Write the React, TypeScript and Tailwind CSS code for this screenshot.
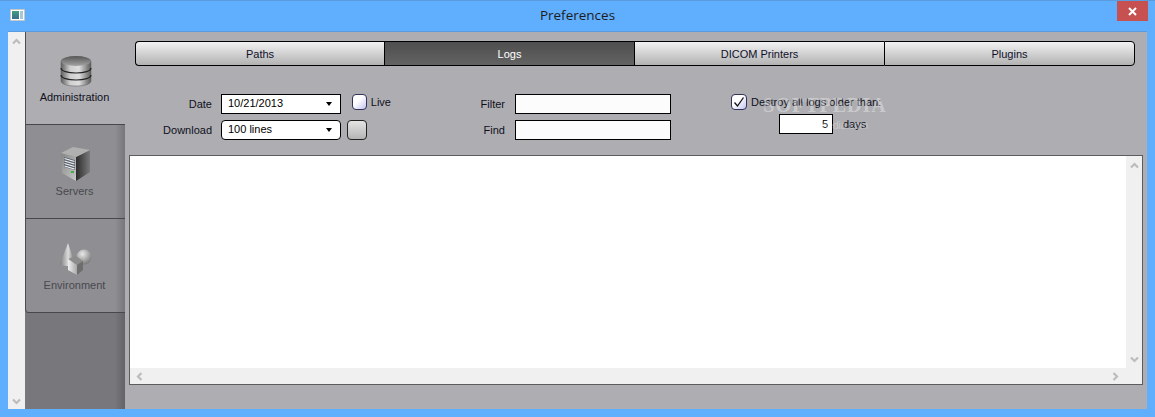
import React from "react";

function Chevron({ dir, className }: { dir: "up" | "down" | "left" | "right"; className?: string }) {
  const pts = {
    up: "1,6.5 4.5,3 8,6.5",
    down: "1,2.5 4.5,6 8,2.5",
    left: "6.5,1 3,4.5 6.5,8",
    right: "2.5,1 6,4.5 2.5,8",
  }[dir];
  return (
    <svg width="9" height="9" viewBox="0 0 9 9" className={className}>
      <polyline points={pts} fill="none" stroke="#bcbcbc" strokeWidth="2.2" />
    </svg>
  );
}

function DatabaseIcon() {
  return (
    <svg width="32" height="32" viewBox="0 0 32 32" className="mt-px">
      <defs>
        <linearGradient id="dbBody" x1="0" x2="1" y1="0" y2="0">
          <stop offset="0" stopColor="#5e5e5e" />
          <stop offset="0.3" stopColor="#cfcfcf" />
          <stop offset="0.6" stopColor="#dedede" />
          <stop offset="1" stopColor="#5a5a5a" />
        </linearGradient>
        <linearGradient id="dbTop" x1="0" x2="0" y1="0" y2="1">
          <stop offset="0" stopColor="#565656" />
          <stop offset="1" stopColor="#a4a4a4" />
        </linearGradient>
      </defs>
      <path d="M1 6v20c0 3 6.5 5 15 5s15-2 15-5V6z" fill="url(#dbBody)" stroke="#666" strokeWidth="0.6" />
      <ellipse cx="16" cy="6" rx="15" ry="5" fill="url(#dbTop)" />
      <path d="M1 13c0 3 6.5 5 15 5s15-2 15-5" fill="none" stroke="#222" strokeWidth="1.2" />
      <path d="M1 20c0 3 6.5 5 15 5s15-2 15-5" fill="none" stroke="#222" strokeWidth="1.2" />
    </svg>
  );
}

function ServerIcon() {
  return (
    <svg width="31" height="35" viewBox="0 0 31 35">
      <defs>
        <linearGradient id="srvFront" x1="0" x2="1" y1="0" y2="1">
          <stop offset="0" stopColor="#858585" />
          <stop offset="1" stopColor="#c8c8c8" />
        </linearGradient>
        <linearGradient id="srvSide" x1="0" x2="1" y1="0" y2="0">
          <stop offset="0" stopColor="#2c2c2c" />
          <stop offset="1" stopColor="#7a7a7a" />
        </linearGradient>
      </defs>
      <path d="M1 6 16 10v24L2 26z" fill="url(#srvFront)" />
      <path d="M16 10 30 3v22L16 34z" fill="url(#srvSide)" />
      <path d="M1 6 13 0l17 3-14 7z" fill="#b0b0b0" />
      <path d="M4 10 15 13v10L4 20z" fill="#5c6470" />
      <path d="M4.5 11.5 14.5 14.5M4.5 14 14.5 17M4.5 16.5 14.5 19.5M4.5 19 14.5 22" stroke="#f4f4f4" strokeWidth="1.2" />
      <rect x="11" y="24" width="3" height="2" fill="#3fb24a" />
    </svg>
  );
}

function ShapesIcon() {
  return (
    <svg width="34" height="33" viewBox="0 0 34 33" className="mt-[2px]">
      <defs>
        <linearGradient id="cone" x1="0" x2="1" y1="0" y2="0">
          <stop offset="0" stopColor="#7c7c7c" />
          <stop offset="0.55" stopColor="#dcdcdc" />
          <stop offset="1" stopColor="#6a6a6a" />
        </linearGradient>
        <radialGradient id="ball" cx="0.4" cy="0.3" r="0.8">
          <stop offset="0" stopColor="#e8e8e8" />
          <stop offset="1" stopColor="#6c6c6c" />
        </radialGradient>
        <linearGradient id="cube" x1="0" x2="1" y1="0" y2="0">
          <stop offset="0" stopColor="#efefef" />
          <stop offset="1" stopColor="#a8a8a8" />
        </linearGradient>
      </defs>
      <path d="M9 0 1 21c1 2.500 13 2.500 15 0z" fill="url(#cone)" />
      <circle cx="25" cy="14" r="7.500" fill="url(#ball)" />
      <path d="M9 16 17 13 24 18 18 22z" fill="#8c8c8c" />
      <path d="M9 16 18 22v10L9 27z" fill="url(#cube)" />
      <path d="M24 18 18 22v10l6-5z" fill="#6e6e6e" />
    </svg>
  );
}

function SideTab({ label, icon, active, last }: { label: string; icon: React.ReactNode; active?: boolean; last?: boolean }) {
  return (
    <div
      className={`flex flex-col items-center border-l border-b border-l-[#4c4c50] border-b-[#48484c] ${
        active
          ? "h-[93px] bg-[#aeaeb2] text-[#10101c]"
          : "h-[94px] bg-[linear-gradient(to_right,#8f8f93_90%,#77777b)] text-[#48484e]"
      } ${last ? "rounded-bl-[4px]" : ""}`}
    >
      <div className={`flex items-start justify-center pt-[22px] ${active ? "h-[58px]" : "h-[59px]"}`}>{icon}</div>
      <span className="pr-[2px] text-[11px] leading-[14px]">{label}</span>
    </div>
  );
}

function SegTab({ label, active, pos }: { label: string; active?: boolean; pos: "first" | "mid" | "last" }) {
  return (
    <div
      className={`flex h-[25px] items-center justify-center border-y border-l border-black pt-px text-[11px] ${
        pos === "first" ? "w-[249px] rounded-l-[4px]" : pos === "last" ? "w-[251px] rounded-r-[4px] border-r" : "w-[250px]"
      } ${
        active
          ? "bg-[linear-gradient(to_bottom,#4e4e4e,#636363)] text-white"
          : "bg-[linear-gradient(to_bottom,#f2f2f2,#b2b2b2)] text-[#10102c]"
      }`}
    >
      {label}
    </div>
  );
}

function Combo({ value, rounded }: { value: string; rounded?: boolean }) {
  return (
    <div
      className={`flex h-5 w-[120px] items-center justify-between border border-black bg-white pl-[6px] pr-[8px] text-[11px] text-black ${
        rounded ? "rounded-[4px]" : ""
      }`}
    >
      <span className="-mt-[2px]">{value}</span>
      <span className="h-0 w-0 border-x-[3.5px] border-t-[4px] border-x-transparent border-t-black" />
    </div>
  );
}

function CheckBox({ checked }: { checked?: boolean }) {
  return (
    <div className="flex h-4 w-4 items-center justify-center rounded-[4px] border border-[#33335a] bg-[linear-gradient(135deg,#ffffff_40%,#c4c4f0)]">
      {checked && (
        <svg width="12" height="12" viewBox="0 0 12 12">
          <polyline points="1.5,6.5 4.5,10 10.5,1.5" fill="none" stroke="#111" strokeWidth="1.3" />
        </svg>
      )}
    </div>
  );
}

export default function App() {
  return (
    <div className="flex h-[417px] w-[1155px] flex-col overflow-hidden border-t border-[#5a9ade] bg-[#60afff] font-['Liberation_Sans',sans-serif]">
      <div className="relative flex h-[30px] shrink-0 items-center justify-center">
        <div className="absolute left-[10px] top-[8px] flex h-[12px] w-[15px] gap-[1px] rounded-[1px] border border-[#c8c8c8] bg-white p-[1px]">
          <div className="w-[7px] bg-[linear-gradient(to_bottom,#3f9f80,#3a6a8a)]" />
          <div className="w-[3px] bg-[#a8c8d8]" />
        </div>
        <span className="-mt-[1px] font-['Open_Sans',sans-serif] text-[13.5px] text-[#1c1c1c]">Preferences</span>
        <div className="absolute right-[7px] top-0 flex h-[20px] w-[31px] items-center justify-center bg-[#c75050]">
          <svg width="9" height="9" viewBox="0 0 9 9">
            <path d="M1 1 8 8M8 1 1 8" stroke="#fff" strokeWidth="2" />
          </svg>
        </div>
      </div>

      <div className="mx-[8px] flex h-[378px] border-t border-[#5a9ade] bg-[#aeaeb2]">
        <div className="flex w-[17px] shrink-0 flex-col items-center justify-between bg-[#f0f0f0] pb-[3px] pt-[5px]">
          <Chevron dir="up" />
          <Chevron dir="down" />
        </div>

        <div className="flex w-[100px] shrink-0 flex-col bg-[linear-gradient(to_right,#78787c_90%,#636367)]">
          <SideTab label="Administration" icon={<DatabaseIcon />} active />
          <SideTab label="Servers" icon={<ServerIcon />} />
          <SideTab label="Environment" icon={<ShapesIcon />} last />
        </div>

        <div className="relative flex min-w-0 flex-1 flex-col pb-[24px] pt-[9px]">
          <div className="ml-[10px] flex">
            <SegTab label="Paths" pos="first" />
            <SegTab label="Logs" pos="mid" active />
            <SegTab label="DICOM Printers" pos="mid" />
            <SegTab label="Plugins" pos="last" />
          </div>

          <div className="ml-[10px] mt-[28px] flex h-[46px] text-[11px] text-[#10101c]">
            <div className="flex w-[77px] flex-col items-end gap-[6px]">
              <span className="flex h-5 items-center">Date</span>
              <span className="flex h-5 items-center">Download</span>
            </div>
            <div className="ml-[9px] flex flex-col gap-[6px]">
              <Combo value="10/21/2013" />
              <Combo value="100 lines" rounded />
            </div>
            <div className="ml-[6px] flex w-[44px] flex-col gap-[6px]">
              <div className="ml-[5px] flex h-5 items-start gap-[4px]">
                <CheckBox />
                <span className="leading-[16px]">Live</span>
              </div>
              <div className="h-5 w-5 rounded-[4px] border border-[#222] bg-[linear-gradient(to_bottom,#e4e4e4,#b4b4b4)]" />
            </div>
            <div className="flex w-[114px] flex-col items-end gap-[6px]">
              <span className="flex h-5 items-center">Filter</span>
              <span className="flex h-5 items-center">Find</span>
            </div>
            <div className="ml-[10px] flex flex-col gap-[6px]">
              <div className="h-5 w-[156px] border border-black bg-[#fcfcfc]" />
              <div className="h-5 w-[156px] border border-black bg-[#fcfcfc]" />
            </div>
            <div className="ml-[60px] flex flex-col">
              <div className="flex h-5 items-start gap-[4px]">
                <CheckBox checked />
                <span className="leading-[16px]">Destroy all logs older than:</span>
              </div>
              <div className="ml-[48px] flex h-5 items-center">
                <div className="flex h-5 w-[54px] items-center justify-end border border-black bg-white pr-[4px] text-black">5</div>
                <span className="ml-[10px]">days</span>
              </div>
            </div>
          </div>

          <div className="ml-[4px] mr-[4px] mt-[15px] flex h-[230px] flex-col border border-[#5c5c5c] bg-white">
            <div className="flex min-h-0 flex-1">
              <div className="flex-1" />
              <div className="flex w-[16px] flex-col items-center justify-between bg-[#f0f0f0] pb-[4px] pt-[5px]">
                <Chevron dir="up" />
                <Chevron dir="down" />
              </div>
            </div>
            <div className="flex h-[16px] items-center justify-between bg-[#f0f0f0] pl-[5px] pr-[22px]">
              <Chevron dir="left" />
              <Chevron dir="right" />
            </div>
          </div>

          <div className="pointer-events-none absolute left-[625px] top-[61px] flex w-[150px] flex-col items-center text-white/35">
            <span className="font-['Liberation_Serif',serif] text-[20px] font-bold leading-[24px] tracking-[1px]">SOFTPEDIA</span>
            <span className="mt-[3px] text-[10px] leading-[12px]">www.softpedia.com</span>
          </div>
        </div>
      </div>
    </div>
  );
}
